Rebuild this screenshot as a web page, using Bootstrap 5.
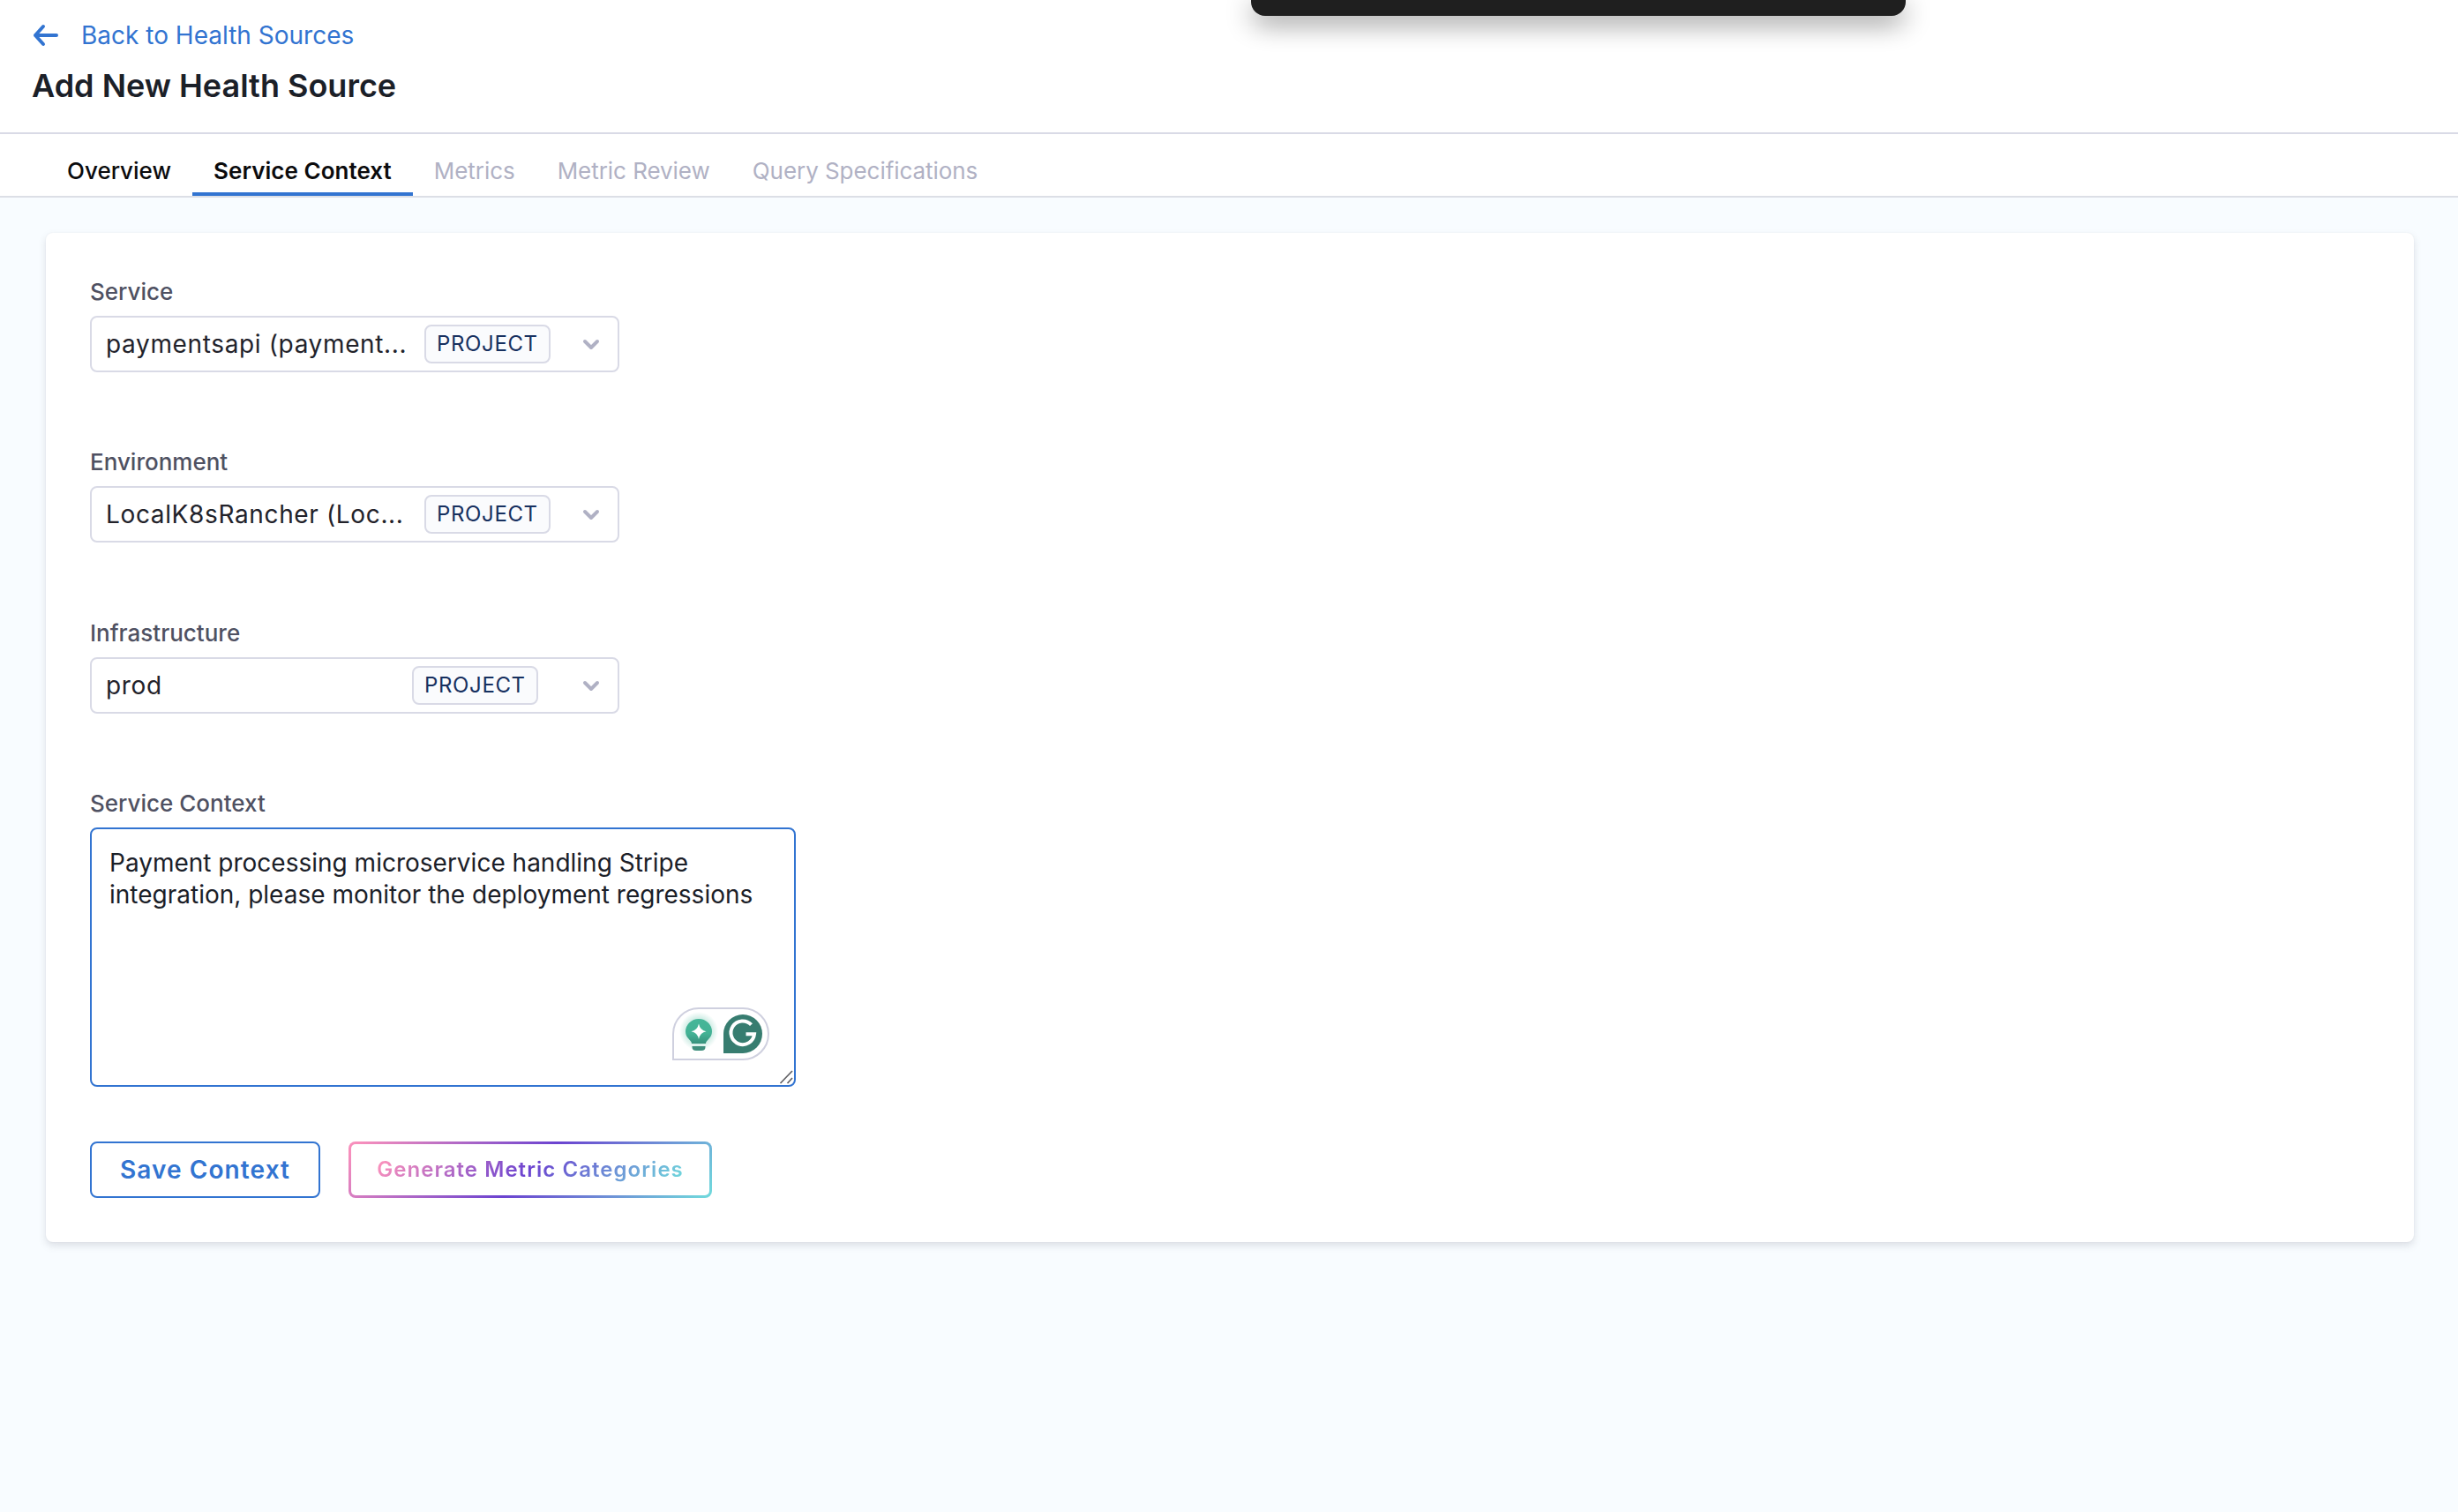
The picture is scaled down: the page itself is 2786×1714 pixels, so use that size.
<!DOCTYPE html>
<html lang="en">
<head>
<meta charset="utf-8">
<meta name="viewport" content="width=device-width, initial-scale=1">
<title>Add New Health Source</title>
<link href="https://cdn.jsdelivr.net/npm/bootstrap@5.3.0/dist/css/bootstrap.min.css" rel="stylesheet">
<style>
  :root { --hs-blue: #3274d1; --hs-line: #d9dae6; }
  body { font-family: Inter, "Liberation Sans", sans-serif; font-size: 28px; background: #f8fcff; color: #22222a; min-height: 100vh; overflow: hidden; }
  svg { display: block; flex: none; }
  .page-head { height: 152px; padding: 23px 36px 0; border-bottom: 2px solid var(--hs-line); }
  .back-link { color: var(--hs-blue); line-height: 34px; gap: 26px; }
  .page-title { font-size: 36px; line-height: 44px; font-weight: 600; color: #1b2028; margin: 18px 0 0; }
  .toast-bar { width: 742px; height: 18px; left: 1418px; background: #1f1f1f; border-radius: 0 0 16px 16px; box-shadow: 0 8px 30px rgba(0,0,0,.48); }
  .page-tabs { height: 72px; padding-left: 52px; border-bottom: 2px solid #dcdfe6; }
  .page-tabs .nav-link { font-size: 26px; line-height: 32px; padding: 26px 24px 8px; color: #0b0b0d; font-weight: 500; border-bottom: 4px solid transparent; border-radius: 0; }
  .page-tabs .nav-link.active { font-weight: 600; letter-spacing: .04px; border-bottom-color: var(--hs-blue); }
  .page-tabs .nav-link.disabled { color: #b0b1c4; font-weight: 400; letter-spacing: -.05px; }
  .form-panel { margin: 40px 50px 0 52px; padding: 50px; border: 0; border-radius: 8px; box-shadow: 0 0 2px rgba(40,41,61,.06), 0 4px 8px rgba(96,97,112,.18); }
  .field { margin-bottom: 85.4px; }
  .field-last { margin-bottom: 62px; }
  .field-label { font-size: 26px; line-height: 32px; font-weight: 500; color: #4f5162; margin: 0; padding: 1px 0 11px; }
  .picker { width: 600px; height: 64px; border: 2px solid var(--hs-line); border-radius: 8px; padding: 0 20px 0 16px; line-height: 60px; letter-spacing: .64px; }
  .scope-tag { width: 143px; height: 44px; border: 2px solid var(--hs-line); border-radius: 8px; background: #fafbfd; color: #17305f; font-size: 24px; line-height: 40px; padding-left: 12px; margin-right: 36px; }
  .scope-tag-inset { margin-right: 50px; }
  .context-box { width: 800px; height: 294px; }
  .context-box .form-control { font-size: 28px; line-height: 36px; padding: 20px; border: 2px solid var(--hs-blue); border-radius: 8px; color: #1b2028; resize: none; box-shadow: none; overflow: hidden; }
  .assist { right: 30px; bottom: 30px; }
  .grip { right: 2px; bottom: 2px; }
  .actions { gap: 32px; }
  .action-btn { height: 64px; border-radius: 8px; padding: 0; font-weight: 600; letter-spacing: 1.1px; }
  .save-btn, .save-btn:hover { width: 261px; font-size: 28px; color: var(--hs-blue); border: 2px solid var(--hs-blue); background: #fff; }
  .gen-btn, .gen-btn:hover { width: 412px; font-size: 24px; letter-spacing: 1.05px; border: 3px solid transparent; background: linear-gradient(#fff,#fff) padding-box, linear-gradient(135deg,#f78fbc 3%,#6b43d0 50%,#70d6dc 98%) border-box; }
  .gen-btn span { background: linear-gradient(135deg,#f78fbc 4%,#6b43d0 50%,#70d6dc 98%); -webkit-background-clip: text; background-clip: text; color: transparent; }
</style>
</head>
<body>
<header class="page-head bg-white">
  <a href="#" class="back-link d-flex align-items-center text-decoration-none">
    <svg width="30" height="34" viewBox="0 0 30 34" fill="none" stroke="#3274d1" stroke-width="4" stroke-linecap="round" stroke-linejoin="round"><path d="M28 17H4M13 7L4 17L13 27"/></svg>
    <span>Back to Health Sources</span>
  </a>
  <h1 class="page-title">Add New Health Source</h1>
</header>
<div class="toast-bar position-absolute top-0"></div>

<nav class="page-tabs nav bg-white">
  <a class="nav-link" href="#">Overview</a>
  <a class="nav-link active" href="#">Service Context</a>
  <a class="nav-link disabled">Metrics</a>
  <a class="nav-link disabled">Metric Review</a>
  <a class="nav-link disabled">Query Specifications</a>
</nav>

<main class="form-panel card">
  <div class="field">
    <div class="field-label">Service</div>
    <div class="picker d-flex align-items-center">
      <span class="flex-grow-1 text-nowrap">paymentsapi (payment...</span>
      <span class="scope-tag">PROJECT</span>
      <svg width="20" height="14" viewBox="0 0 20 14" fill="none" stroke="#b0b1c4" stroke-width="4" stroke-linecap="round" stroke-linejoin="round"><path d="M3 4L10 11L17 4"/></svg>
    </div>
  </div>
  <div class="field">
    <div class="field-label">Environment</div>
    <div class="picker d-flex align-items-center">
      <span class="flex-grow-1 text-nowrap">LocalK8sRancher (Loc...</span>
      <span class="scope-tag">PROJECT</span>
      <svg width="20" height="14" viewBox="0 0 20 14" fill="none" stroke="#b0b1c4" stroke-width="4" stroke-linecap="round" stroke-linejoin="round"><path d="M3 4L10 11L17 4"/></svg>
    </div>
  </div>
  <div class="field">
    <div class="field-label">Infrastructure</div>
    <div class="picker d-flex align-items-center">
      <span class="flex-grow-1 text-nowrap">prod</span>
      <span class="scope-tag scope-tag-inset">PROJECT</span>
      <svg width="20" height="14" viewBox="0 0 20 14" fill="none" stroke="#b0b1c4" stroke-width="4" stroke-linecap="round" stroke-linejoin="round"><path d="M3 4L10 11L17 4"/></svg>
    </div>
  </div>
  <div class="field-last">
    <label class="field-label d-block" for="ctx">Service Context</label>
    <div class="context-box position-relative">
      <textarea id="ctx" class="form-control h-100" spellcheck="false">Payment processing microservice handling Stripe integration, please monitor the deployment regressions</textarea>
      <svg class="assist position-absolute" width="110" height="60" viewBox="0 0 110 60" fill="none">
        <defs>
          <radialGradient id="halo"><stop offset=".6" stop-color="#3fb596" stop-opacity=".28"/><stop offset="1" stop-color="#3fb596" stop-opacity="0"/></radialGradient>
          <linearGradient id="bulb" x2="0" y2="1"><stop stop-color="#45b698"/><stop offset=".6" stop-color="#43b295"/><stop offset="1" stop-color="#37917c"/></linearGradient>
        </defs>
        <path d="M1 59V30A29 29 0 0 1 30 1H80A29 29 0 0 1 80 59Z" fill="#fff" stroke="#cfd0df" stroke-width="2"/>
        <circle cx="30" cy="27" r="22" fill="url(#halo)"/>
        <path d="M22 41C22 37 15 35 15 27.500A15 14.500 0 0 1 45 27.500C45 35 38 37 38 41Z" fill="url(#bulb)"/>
        <path d="M22.500 44H37.500V45Q37.500 49 33 49H27Q22.500 49 22.500 45Z" fill="#3f8f7d"/>
        <path d="M30 18.500Q31.500 26 38.500 27.300Q31.500 28.500 30 36Q28.500 28.500 21.500 27.300Q28.500 26 30 18.500Z" fill="#fff"/>
        <path d="M58 52V30A22 22 0 1 1 80 52Z" fill="#377d70"/>
        <path d="M89.500 19.700A13.300 13.300 0 1 0 93 30.300H83.500M93.500 30.300L88.500 30.300" stroke="#fff" stroke-width="4"/>
      </svg>
      <svg class="grip position-absolute" width="18" height="18" viewBox="0 0 18 18" stroke="#606064" stroke-width="1.700"><path d="M2.500 16L16 2M10.500 16L16 10"/></svg>
    </div>
  </div>
  <div class="actions d-flex">
    <button type="button" class="btn action-btn save-btn">Save Context</button>
    <button type="button" class="btn action-btn gen-btn"><span>Generate Metric Categories</span></button>
  </div>
</main>
<script src="https://cdn.jsdelivr.net/npm/bootstrap@5.3.0/dist/js/bootstrap.bundle.min.js"></script>
</body>
</html>
